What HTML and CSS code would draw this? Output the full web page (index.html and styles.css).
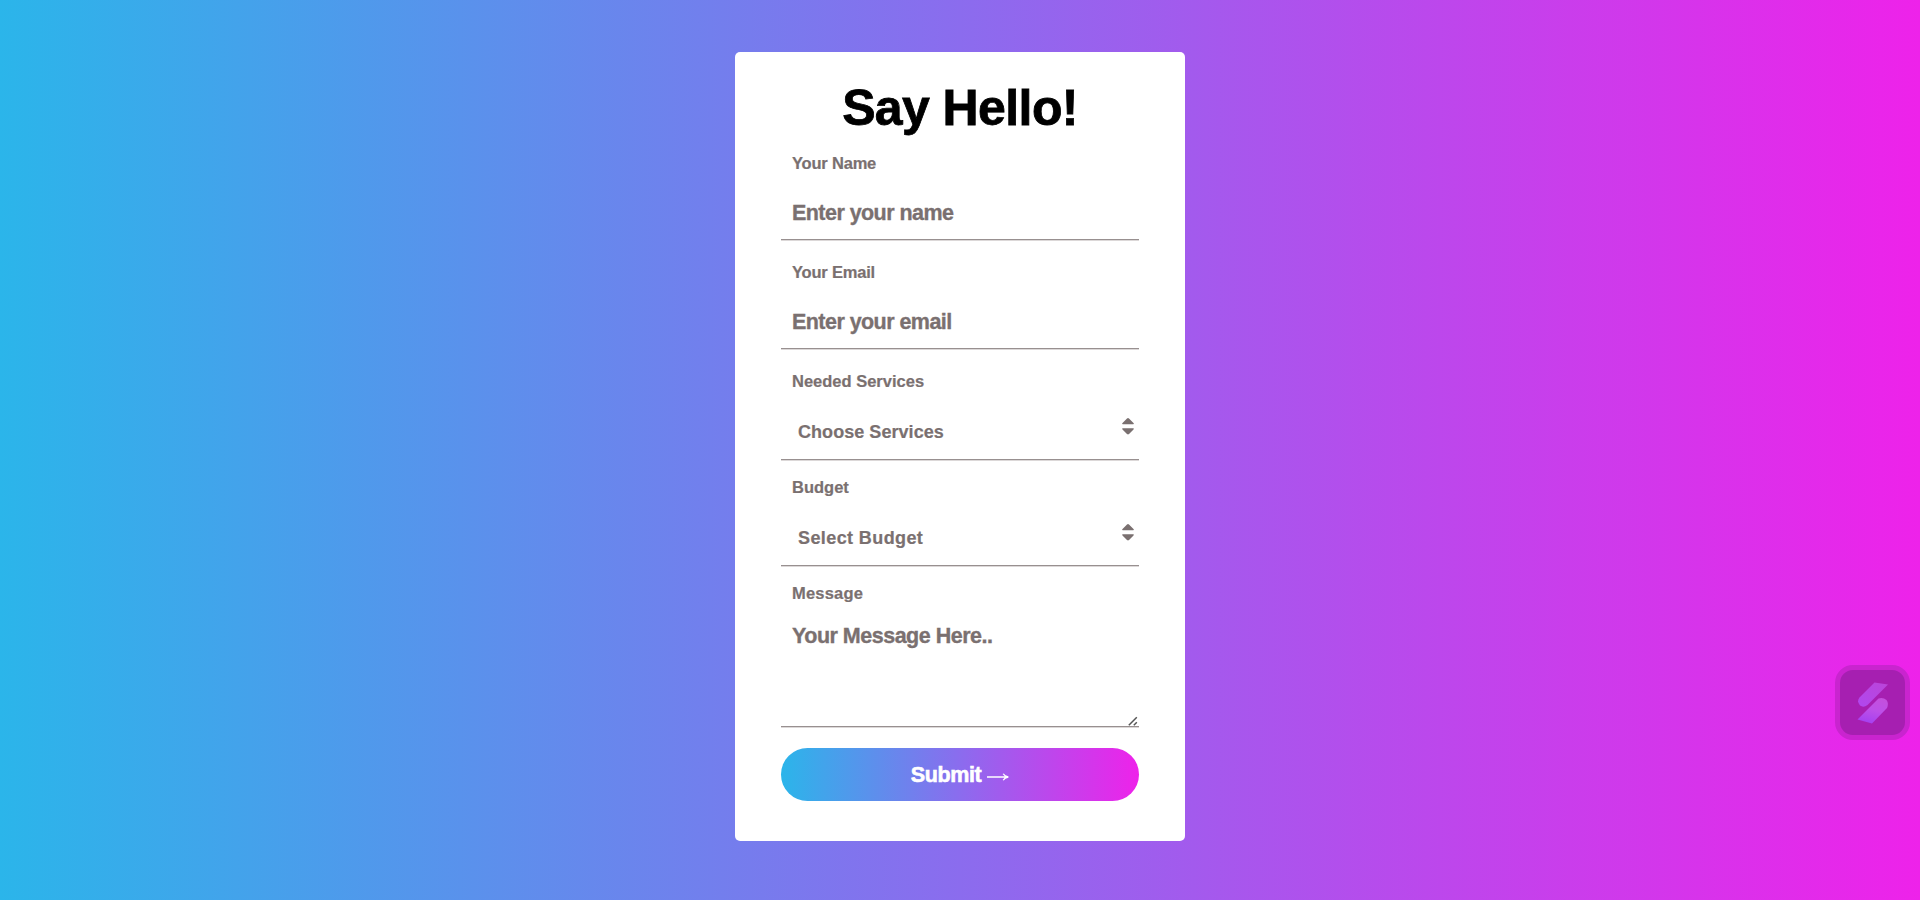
FILE: index.html
```html
<!DOCTYPE html>
<html lang="en">
<head>
<meta charset="utf-8">
<title>Say Hello!</title>
<link rel="stylesheet" href="styles.css">
</head>
<body class="page">
<form class="card">
  <h1 class="title">Say Hello!</h1>
  <div class="field">
    <label class="label label-tight" for="name">Your Name</label>
    <input class="control input" id="name" type="text" placeholder="Enter your name">
  </div>
  <div class="field field-wide">
    <label class="label label-tight" for="email">Your Email</label>
    <input class="control input" id="email" type="text" placeholder="Enter your email">
  </div>
  <div class="field field-wide">
    <label class="label" for="services">Needed Services</label>
    <div class="control picker">
      <select class="select" id="services"><option>Choose Services</option></select>
      <svg class="sort" viewBox="0 0 12 17"><path d="M.8 6.2Q-.4 6 .5 4.9L5 .5Q6 -.3 7 .5L11.500 4.900Q12.400 6 11.200 6.200ZM.8 10.300Q-.4 10.500.5 11.600L5 16Q6 16.800 7 16L11.500 11.600Q12.400 10.500 11.200 10.300Z"/></svg>
    </div>
  </div>
  <div class="field field-near">
    <label class="label" for="budget">Budget</label>
    <div class="control picker">
      <select class="select select-budget" id="budget"><option>Select Budget</option></select>
      <svg class="sort" viewBox="0 0 12 17"><path d="M.8 6.2Q-.4 6 .5 4.9L5 .5Q6 -.3 7 .5L11.500 4.900Q12.400 6 11.200 6.200ZM.8 10.300Q-.4 10.500.5 11.600L5 16Q6 16.800 7 16L11.500 11.600Q12.400 10.500 11.200 10.300Z"/></svg>
    </div>
  </div>
  <div class="field field-near message-field">
    <label class="label label-message" for="message">Message</label>
    <textarea class="control message" id="message" placeholder="Your Message Here.."></textarea>
    <svg class="grip" viewBox="0 0 10 10"><path d="M.8 9.200L8.800 1.200M5.800 9.200L8.800 6.200"/></svg>
  </div>
  <button class="submit" type="button"><span>Submit</span>
    <svg class="arrow" viewBox="0 0 22 8"><path d="M0 4H20.500M16.200 .8Q17.500 3.200 21.300 4Q17.500 4.800 16.200 7.200" fill="none" stroke="#fff" stroke-width="1.300"/></svg>
  </button>
</form>
<div class="widget">
  <svg class="widget-logo" viewBox="0 0 32 42">
    <defs>
      <linearGradient id="upper" x1="1" y1="0" x2="0" y2="1"><stop offset="0" stop-color="#bb45d8"/><stop offset="1" stop-color="#b047ef"/></linearGradient>
      <linearGradient id="lower" x1=".8" y1="0" x2=".5" y2="1"><stop offset="0" stop-color="#c450dc"/><stop offset=".5" stop-color="#bd50e8"/><stop offset="1" stop-color="#a641f0"/></linearGradient>
    </defs>
    <path fill="url(#upper)" d="M17.500 .5L31 2.500L10.500 23Q6.500 26 3 23.500Q-.5 19.500 2.500 15.500Z"/>
    <path fill="url(#lower)" d="M21.500 16.500Q26 15 29.500 18Q32 21.500 30 26L15 41.500L.5 37.500Z"/>
  </svg>
</div>
</body>
</html>
```
FILE: styles.css
```css
* { box-sizing: border-box; }

.page {
  margin: 0;
  height: 900px;
  padding-top: 52px;
  overflow: hidden;
  font-family: "Liberation Sans", Arial, sans-serif;
  font-weight: 700;
  color: #7a7070;
  background: linear-gradient(to right, #2bb5ea 0%, #8b6cee 50%, #ee22ea 100%);
}

.card {
  display: flex;
  flex-direction: column;
  width: 450px;
  height: 788.5px;
  margin: 0 auto;
  padding: 26px 46px 39px;
  border-radius: 5px;
  background: #fff;
}

.title {
  margin: 0 0 15px;
  font-size: 50px;
  line-height: 60px;
  letter-spacing: -0.6px;
  text-align: center;
  color: #000;
  -webkit-text-stroke: 0.8px #000;
}

.field { display: flex; flex-direction: column; }
.field-wide { margin-top: 22px; }
.field-near { margin-top: 17px; }

.label {
  height: 20px;
  padding-left: 11px;
  font-size: 16.5px;
  line-height: 20px;
  -webkit-text-stroke: 0.2px;
}
.label-tight { letter-spacing: -0.2px; }
.label-message { letter-spacing: 0.2px; }

.control {
  width: 100%;
  margin: 0;
  border: 0;
  border-bottom: 1px solid #989090;
  box-shadow: 0 1px #dcd8d8;
  background: transparent;
  color: #7a7070;
  font-family: inherit;
  font-weight: 700;
  outline: 0;
}

.input {
  height: 67px;
  padding: 27px 11px 13px;
  font-size: 21.5px;
  line-height: 26px;
  letter-spacing: -0.55px;
  -webkit-text-stroke: 0.35px;
}

.control::placeholder { color: #7a7070; opacity: 1; }

.picker {
  display: flex;
  align-items: flex-start;
  height: 69px;
  padding: 27px 5px 0 17px;
}

.select {
  flex: 1;
  height: 28px;
  padding: 0;
  border: 0;
  appearance: none;
  background: transparent;
  color: inherit;
  font: 700 18px/28px "Liberation Sans", Arial, sans-serif;
  letter-spacing: 0.05px;
  -webkit-text-stroke: 0.2px;
}
.select-budget { letter-spacing: 0.4px; }

.sort { width: 12px; height: 17px; fill: #7a7070; }

.message-field { position: relative; }

.message {
  display: block;
  height: 124px;
  padding: 20px 11px 0;
  font-size: 21.5px;
  line-height: 26px;
  letter-spacing: -0.5px;
  -webkit-text-stroke: 0.35px;
  resize: none;
}

.grip {
  position: absolute;
  right: 1px;
  bottom: 1px;
  width: 10px;
  height: 10px;
  fill: none;
  stroke: #555;
  stroke-width: 1.5px;
}

.submit {
  display: flex;
  align-items: center;
  justify-content: center;
  gap: 6px;
  height: 53px;
  margin-top: 21px;
  padding: 0;
  border: 0;
  border-radius: 27px;
  background: linear-gradient(to right, #2bb5ea 0%, #8b6cee 50%, #ee22ea 100%);
  color: #fff;
  font: 700 21.5px/26px "Liberation Sans", Arial, sans-serif;
  letter-spacing: -0.4px;
  -webkit-text-stroke: 0.6px;
}

.arrow { width: 22px; height: 8px; margin-top: 4px; }

.widget {
  position: absolute;
  left: 1835px;
  top: 665px;
  display: flex;
  align-items: center;
  justify-content: center;
  width: 75px;
  height: 75px;
  border: 5px solid #c924cf;
  border-radius: 18px;
  background: #a61fb1;
}
.widget-logo { width: 32px; height: 42px; }
```
